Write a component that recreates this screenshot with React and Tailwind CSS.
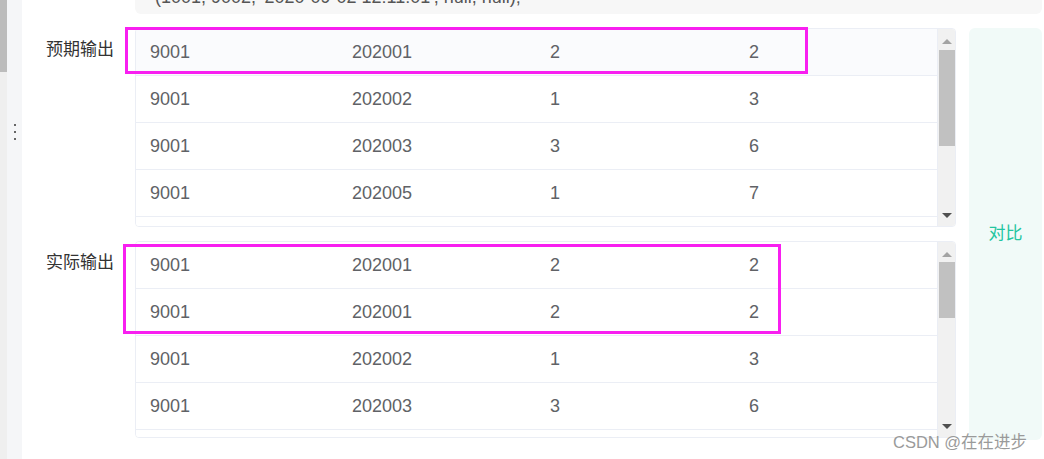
import React from "react";

const expected = [
  ["9001", "202001", "2", "2"],
  ["9001", "202002", "1", "3"],
  ["9001", "202003", "3", "6"],
  ["9001", "202005", "1", "7"],
  ["9001", "202006", "2", "9"],
];

const actual = [
  ["9001", "202001", "2", "2"],
  ["9001", "202001", "2", "2"],
  ["9001", "202002", "1", "3"],
  ["9001", "202003", "3", "6"],
  ["9001", "202005", "1", "7"],
];

const ScrollBar = ({ thumbTop, thumbHeight }) => (
  <div className="relative w-[18px] h-full bg-[#f1f1f1] border-l border-[#ebeef5]">
    <div className="absolute left-[4px] top-[10px] w-0 h-0 border-x-[5px] border-x-transparent border-b-[5px] border-b-[#a3a3a3]" />
    <div
      className="absolute left-[1px] right-0 bg-[#c1c1c1]"
      style={{ top: thumbTop, height: thumbHeight }}
    />
    <div className="absolute left-[4px] bottom-[8px] w-0 h-0 border-x-[5px] border-x-transparent border-t-[5px] border-t-[#505050]" />
  </div>
);

const DataTable = ({ rows, height, firstBg, thumbTop, thumbHeight }) => (
  <div
    className="flex w-[821px] overflow-hidden rounded-[4px] border border-[#ebeef5] bg-white"
    style={{ height }}
  >
    <div className="flex-1 overflow-hidden">
      {rows.map((r, i) => (
        <div
          key={i}
          className={`grid grid-cols-[202px_198px_199px_1fr] h-[47px] items-center border-b border-[#ebeef5] text-[18px] text-[#606266] ${
            i === 0 && firstBg ? "bg-[#fafbfd]" : "bg-white"
          }`}
        >
          {r.map((c, j) => (
            <div key={j} className="pl-[14px]">
              {c}
            </div>
          ))}
        </div>
      ))}
    </div>
    <ScrollBar thumbTop={thumbTop} thumbHeight={thumbHeight} />
  </div>
);

export default function App() {
  return (
    <div
      className="relative flex w-[1044px] h-[459px] overflow-hidden bg-white"
      style={{ fontFamily: '"Liberation Sans", "Noto Sans CJK SC", sans-serif' }}
    >
      {/* page scrollbar */}
      <div className="w-[7px] h-full bg-[#efefef]">
        <div className="h-[72px] bg-[#bcbcbc]" />
      </div>
      {/* splitter strip */}
      <div className="flex w-[15px] h-full flex-col items-center bg-[#f5f6f8] pt-[124px]">
        <div className="flex flex-col gap-[5px]">
          <div className="h-[2px] w-[2px] bg-[#666]" />
          <div className="h-[2px] w-[2px] bg-[#666]" />
          <div className="h-[2px] w-[2px] bg-[#666]" />
        </div>
      </div>

      <div className="flex flex-1 flex-col">
        <div className="ml-[113px] mr-[2px] h-[14px] overflow-hidden rounded-b-[6px] bg-[#f7f7f7]">
          <div className="mt-[-13px] pl-[20px] text-[18px] leading-[20px] text-[#555]">
            (1001, 9002, '2020-09-02 12:11:01', null, null);
          </div>
        </div>

        <div className="mt-[14px] flex">
          <div className="flex flex-col">
            <div className="relative flex">
              <div className="w-[113px] pl-[24px] pt-[9px] text-[17px] text-[#333]">预期输出</div>
              <DataTable
                rows={expected}
                height={199}
                firstBg
                thumbTop={21}
                thumbHeight={96}
              />
              <div className="absolute left-[103px] top-[-1px] h-[47px] w-[683px] border-[3px] border-[#f81ff0]" />
            </div>
            <div className="relative mt-[14px] flex">
              <div className="w-[113px] pl-[24px] pt-[9px] text-[17px] text-[#333]">实际输出</div>
              <DataTable
                rows={actual}
                height={197}
                thumbTop={20}
                thumbHeight={56}
              />
              <div className="absolute left-[101px] top-[3px] h-[90px] w-[658px] border-[3px] border-[#f81ff0]" />
            </div>
          </div>
          <div className="ml-[13px] mr-[2px] flex h-[412px] flex-1 items-center justify-center rounded-[6px] bg-[#f1faf8] text-[17px] text-[#23c5a0]">
            对比
          </div>
        </div>
      </div>

      <div className="absolute left-[893px] top-[430px] text-[16.5px] text-[#9a9a9a]">
        CSDN @在在进步
      </div>
    </div>
  );
}
